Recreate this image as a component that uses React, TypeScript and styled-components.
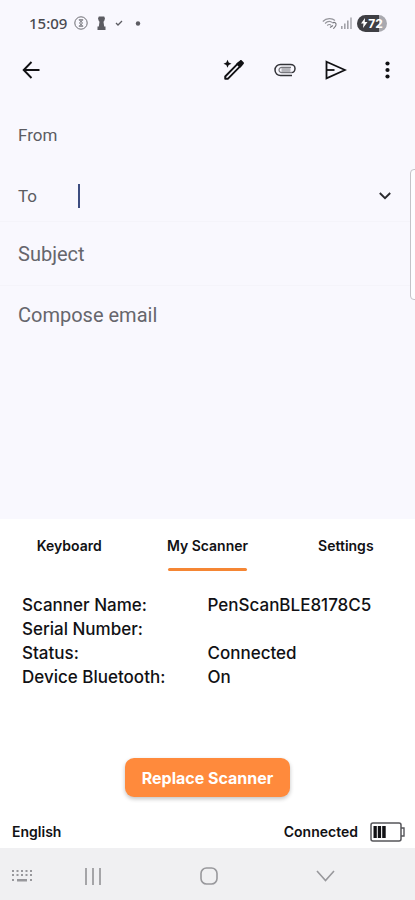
import React, { useState } from "react";
import styled, { createGlobalStyle } from "styled-components";

const GlobalStyle = createGlobalStyle`
  *, *::before, *::after { box-sizing: border-box; }
  body { margin: 0; background: #f9f8fe; }
  button, input { font: inherit; color: inherit; }
  svg { display: block; flex: none; }
`;

const Screen = styled.div`
  position: relative;
  display: flex;
  flex-direction: column;
  min-height: 100vh;
  overflow: hidden;
  background: #f9f8fe;
  color: #111114;
  font-family: Inter, sans-serif;
`;

const StatusBar = styled.div`
  display: flex;
  align-items: center;
  justify-content: space-between;
  height: 46px;
  padding: 0 28px 0 29px;
`;

const StatusGroup = styled.div<{ $gap: number }>`
  display: flex;
  align-items: center;
  gap: ${(p) => p.$gap}px;
  color: #5c5c62;
`;

const Clock = styled.time`
  font-family: "Noto Sans", sans-serif;
  font-size: 15px;
  font-weight: 500;
  color: #4a4a50;
`;

const Notifications = styled.div`
  display: flex;
  align-items: center;
  gap: 9px;
`;

const BatteryPill = styled.span`
  display: flex;
  align-items: center;
  justify-content: center;
  width: 30px;
  height: 17px;
  margin-left: 2px;
  border-radius: 9px;
  background: linear-gradient(90deg, #3f3f44 72%, #a9a9af 72%);
  color: #ffffff;
  font-size: 12px;
  font-weight: 700;
`;

const AppBar = styled.header`
  display: flex;
  align-items: center;
  height: 48px;
  padding: 0 4px 0 7px;
`;

const Actions = styled.div`
  display: flex;
  gap: 3px;
  margin-left: auto;
`;

const IconButton = styled.button`
  display: grid;
  place-items: center;
  width: 48px;
  height: 48px;
  padding: 0;
  border: 0;
  background: none;
`;

const Compose = styled.main`
  display: flex;
  flex: 1;
  flex-direction: column;
  padding-top: 6px;
  font-family: Roboto, sans-serif;
  color: #5c5c62;
`;

const Row = styled.div<{ $height: number; $line?: boolean }>`
  display: flex;
  align-items: center;
  height: ${(p) => p.$height}px;
  padding: 0 6px 0 18px;
  border-bottom: ${(p) => (p.$line ? "1px solid #f5f4fa" : "0")};
`;

const FieldLabel = styled.label`
  flex: none;
  width: 60px;
  font-size: 17px;
`;

const Caret = styled.span`
  width: 2px;
  height: 24px;
  background: #3d4d80;
`;

const Field = styled.input`
  flex: 1;
  min-width: 0;
  padding: 0;
  border: 0;
  outline: 0;
  background: none;
  font-size: 20px;

  &::placeholder { color: #66666c; opacity: 1; }
`;

const ExpandButton = styled(IconButton)`
  width: 48px;
  height: 40px;
`;

const EdgeHandle = styled.div`
  position: absolute;
  top: 169px;
  right: -4px;
  width: 9px;
  height: 131px;
  border: 1px solid #c3c3c8;
  border-radius: 4px;
  background: #fdfdff;
`;

const Panel = styled.section`
  background: #ffffff;
`;

const Tabs = styled.div`
  display: grid;
  grid-template-columns: repeat(3, 1fr);
  justify-items: center;
`;

const Tab = styled.button<{ $active: boolean }>`
  position: relative;
  height: 52px;
  padding: 0;
  border: 0;
  background: none;
  font-size: 14px;
  font-weight: 600;

  &::after {
    content: "";
    position: absolute;
    right: 1px;
    bottom: 0;
    left: 1px;
    height: 3px;
    border-radius: 2px;
    background: ${(p) => (p.$active ? "#f58634" : "transparent")};
  }
`;

const Details = styled.dl`
  display: grid;
  grid-template-columns: 1fr 1fr;
  margin: 0;
  padding: 22px 22px 69px;
  font-size: 17px;
  font-weight: 500;
  line-height: 24px;
`;

const Term = styled.dt`
  white-space: nowrap;
`;

const Value = styled.dd`
  margin: 0;
  white-space: nowrap;
`;

const ButtonRow = styled.div`
  display: flex;
  justify-content: center;
  padding-bottom: 18px;
`;

const ReplaceButton = styled.button`
  height: 39px;
  padding: 0 17px;
  border: 0;
  border-radius: 9px;
  background: #ff8a3c;
  box-shadow: 0 2px 4px rgba(0, 0, 0, 0.24);
  color: #ffffff;
  font-size: 16px;
  font-weight: 700;
`;

const Footer = styled.div`
  display: flex;
  align-items: center;
  gap: 12px;
  height: 33px;
  padding: 0 10px 0 12px;
  font-size: 14px;
  font-weight: 600;
`;

const Language = styled.span`
  margin-right: auto;
`;

const NavBar = styled.nav`
  display: grid;
  grid-template-columns: 27px repeat(3, 1fr);
  height: 52px;
  padding: 4px 31px 0 8px;
  background: #f0f0f2;
`;

const NavButton = styled.button`
  display: grid;
  place-items: center;
  padding: 0;
  border: 0;
  background: none;
  color: #98989c;
`;

const details = [
  ["Scanner Name:", "PenScanBLE8178C5"],
  ["Serial Number:", ""],
  ["Status:", "Connected"],
  ["Device Bluetooth:", "On"],
];

const tabs = ["Keyboard", "My Scanner", "Settings"];

const CircleIcon = () => (
  <svg width="14" height="14" viewBox="0 0 14 14" fill="none" stroke="currentColor">
    <circle cx="7" cy="7" r="6.2" strokeWidth="0.9" />
    <path d="M4.800 3.800h4.400M4.800 10.200h4.400M5.500 4 8.500 7 5.500 10M8.500 4 5.500 7l3 3" strokeWidth="0.9" />
  </svg>
);

const RookIcon = () => (
  <svg width="9" height="14" viewBox="0 0 9 14" fill="currentColor">
    <path d="M1.800.5h5.400l.8 2-.8 2.500-.7.800.7 4.700h1.300V14H.5v-3.500h1.300l.7-4.700-.7-.8L1 2.500z" />
  </svg>
);

const CheckIcon = () => (
  <svg width="8" height="8" viewBox="0 0 8 8" fill="none" stroke="currentColor" strokeWidth="1.300">
    <path d="m1 4 2 2 4-4" />
  </svg>
);

const DotIcon = () => (
  <svg width="9" height="5" viewBox="0 0 9 5" fill="currentColor">
    <circle cx="6" cy="2.500" r="2.200" />
  </svg>
);

const WifiIcon = () => (
  <svg width="16" height="13" viewBox="0 0 16 13" fill="none" stroke="#96969c" strokeWidth="1.100">
    <path d="M.8 4.500C4.500.8 10 .8 13 3.500M3 6.500c2.500-2.500 5.500-2.500 7.500-.8M5.200 8.500c1.500-1.400 3-1.200 4 0" />
    <path d="M10.500 6.200c2-2 4 0 3.500 1.800-.3 2-2 2-2.500 3.800M8 10.500l3-2" stroke="#77777d" />
  </svg>
);

const SignalIcon = () => (
  <svg width="11" height="12" viewBox="0 0 11 12" fill="#a2a2a8">
    <path d="M0 9h1.600v3H0zM3 6.500h1.600V12H3zM6 3.500h1.600V12H6z" />
    <path d="M9.300.5h1.400V12H9.300z" />
  </svg>
);

const BoltIcon = () => (
  <svg width="7" height="10" viewBox="0 0 7 10" fill="#ffffff">
    <path d="M4 0 0 5.500h2.500L2 10l4.500-6H3.800z" />
  </svg>
);

const BackIcon = () => (
  <svg width="18" height="18" viewBox="0 0 18 18" fill="none" stroke="currentColor" strokeWidth="1.900">
    <path d="M9.500 1 1.700 9l7.800 8M2 9h15.500" />
  </svg>
);

const MagicPenIcon = () => (
  <svg width="22" height="22" viewBox="0 0 22 22" fill="none">
    <path
      d="M2.200 17.500 15.800 3.700l2.500 2.500L4.800 19.800H2.200z"
      stroke="currentColor"
      strokeWidth="1.900"
      strokeLinejoin="round"
    />
    <path d="m13 5 4-3.600c.6-.5 1.300-.5 1.800 0l1.800 1.800c.5.5.5 1.200 0 1.800L17 9z" fill="currentColor" />
    <path d="M4.500.8 5.700 3.500 8.500 4.700 5.700 6 4.500 8.800 3.300 6 .5 4.700l2.800-1.200z" fill="currentColor" />
  </svg>
);

const ClipIcon = () => (
  <svg width="22" height="14" viewBox="0 0 22 14" fill="none">
    <path d="M7.500 7h9" stroke="#b4b4ba" strokeWidth="4" />
    <path
      d="M17.500 9.600H7.800C6.200 9.600 5 8.400 5 7s1.200-2.600 2.800-2.600H17"
      stroke="#77777d"
      strokeWidth="1.200"
    />
    <path
      d="M18 12.500H6.500C3.500 12.500 1 10.200 1 7s2.500-5.500 5.500-5.500h10C19 1.500 21 3.200 21 5.500s-1.500 4.100-3.500 4.100"
      stroke="#333338"
      strokeWidth="1.500"
    />
  </svg>
);

const SendIcon = () => (
  <svg width="22" height="20" viewBox="0 0 22 20" fill="none" stroke="currentColor" strokeWidth="1.800">
    <path d="M1.500 1.700 20 10 1.500 18.300z" />
    <path d="M2 10h7.500" />
  </svg>
);

const MoreIcon = () => (
  <svg width="5" height="18" viewBox="0 0 5 18" fill="currentColor">
    <circle cx="2.500" cy="2.500" r="2.100" />
    <circle cx="2.500" cy="9" r="2.100" />
    <circle cx="2.500" cy="15.500" r="2.100" />
  </svg>
);

const ExpandIcon = () => (
  <svg width="12" height="8" viewBox="0 0 12 8" fill="none" stroke="#2a2a2e" strokeWidth="1.900">
    <path d="m.8 1 5.200 5.200L11.200 1" />
  </svg>
);

const ScannerBatteryIcon = () => (
  <svg width="35" height="20" viewBox="0 0 35 20">
    <rect x="1" y="1" width="30" height="18" rx="2" fill="none" stroke="#55555a" strokeWidth="1.500" />
    <path d="M31 6h3v8h-3" fill="none" stroke="#55555a" strokeWidth="1.400" />
    <path d="M3.500 4h3.300v12H3.500zM7.800 4h3.300v12H7.800zM12.200 4h3.500v12h-3.500z" fill="#111114" />
  </svg>
);

const KeyboardIcon = () => (
  <svg width="20" height="12" viewBox="0 0 20 12" fill="currentColor">
    {[0, 4].map((y) =>
      [0, 4.5, 9, 13.5, 18].map((x) => <rect key={`${x}-${y}`} x={x} y={y} width="2" height="2" />),
    )}
    <path d="M0 9h2v2H0zM5 9h10v2.500H5zM18 9h2v2h-2z" />
  </svg>
);

const RecentsIcon = () => (
  <svg width="18" height="17" viewBox="0 0 18 17" stroke="currentColor" strokeWidth="1.700">
    <path d="M2 0v17M9 0v17M16 0v17" />
  </svg>
);

const HomeIcon = () => (
  <svg width="18" height="18" viewBox="0 0 18 18" fill="none" stroke="currentColor" strokeWidth="1.600">
    <rect x="1" y="1" width="16" height="16" rx="5.500" />
  </svg>
);

const HideIcon = () => (
  <svg width="19" height="12" viewBox="0 0 19 12" fill="none" stroke="currentColor" strokeWidth="1.600">
    <path d="m1 1 8.500 9.500L18 1" />
  </svg>
);

export default function App() {
  const [active, setActive] = useState("My Scanner");

  return (
    <>
      <GlobalStyle />
      <Screen>
        <StatusBar>
          <StatusGroup $gap={7}>
            <Clock>15:09</Clock>
            <Notifications>
              <CircleIcon />
              <RookIcon />
              <CheckIcon />
              <DotIcon />
            </Notifications>
          </StatusGroup>
          <StatusGroup $gap={3}>
            <WifiIcon />
            <SignalIcon />
            <BatteryPill>
              <BoltIcon />
              72
            </BatteryPill>
          </StatusGroup>
        </StatusBar>

        <AppBar>
          <IconButton aria-label="Back"><BackIcon /></IconButton>
          <Actions>
            <IconButton aria-label="Help me write"><MagicPenIcon /></IconButton>
            <IconButton aria-label="Attach file"><ClipIcon /></IconButton>
            <IconButton aria-label="Send"><SendIcon /></IconButton>
            <IconButton aria-label="More options"><MoreIcon /></IconButton>
          </Actions>
        </AppBar>

        <Compose>
          <Row $height={70}>
            <FieldLabel htmlFor="from">From</FieldLabel>
            <Field id="from" />
          </Row>
          <Row $height={52} $line>
            <FieldLabel htmlFor="to">To</FieldLabel>
            <Caret />
            <Field id="to" />
            <ExpandButton aria-label="Add Cc and Bcc"><ExpandIcon /></ExpandButton>
          </Row>
          <Row $height={64} $line>
            <Field aria-label="Subject" placeholder="Subject" />
          </Row>
          <Row $height={58}>
            <Field aria-label="Compose email" placeholder="Compose email" />
          </Row>
        </Compose>
        <EdgeHandle />

        <Panel>
          <Tabs role="tablist">
            {tabs.map((name) => (
              <Tab
                key={name}
                role="tab"
                aria-selected={name === active}
                $active={name === active}
                onClick={() => setActive(name)}
              >
                {name}
              </Tab>
            ))}
          </Tabs>
          <Details>
            {details.map(([term, value]) => (
              <React.Fragment key={term}>
                <Term>{term}</Term>
                <Value>{value}</Value>
              </React.Fragment>
            ))}
          </Details>
          <ButtonRow>
            <ReplaceButton>Replace Scanner</ReplaceButton>
          </ButtonRow>
          <Footer>
            <Language>English</Language>
            <span>Connected</span>
            <ScannerBatteryIcon />
          </Footer>
        </Panel>

        <NavBar>
          <NavButton aria-label="Switch keyboard"><KeyboardIcon /></NavButton>
          <NavButton aria-label="Recent apps"><RecentsIcon /></NavButton>
          <NavButton aria-label="Home"><HomeIcon /></NavButton>
          <NavButton aria-label="Hide keyboard"><HideIcon /></NavButton>
        </NavBar>
      </Screen>
    </>
  );
}
